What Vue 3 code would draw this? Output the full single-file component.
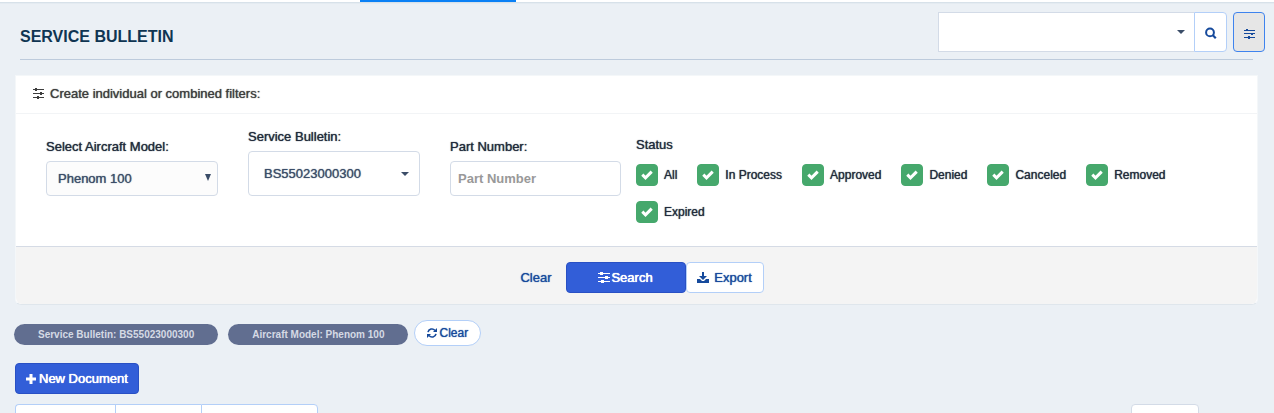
<script setup>
import { ref, reactive } from 'vue'

const quickSearch = ref('')
const model = ref('Phenom 100')
const bulletin = ref('BS55023000300')
const partNumber = ref('')
const statuses = reactive(
  ['All', 'In Process', 'Approved', 'Denied', 'Canceled', 'Removed', 'Expired'].map((name) => ({
    name,
    checked: true
  }))
)
const chips = ['Service Bulletin: BS55023000300', 'Aircraft Model: Phenom 100']
</script>

<template>
  <div class="page">
    <nav class="tabs" aria-label="Sections"><span class="tab-active"></span></nav>

    <header class="header">
      <h1 class="title">SERVICE BULLETIN</h1>
      <div class="actions">
        <div class="group">
          <div class="picker quick">
            <select v-model="quickSearch" class="select" aria-label="Quick search">
              <option value=""></option>
            </select>
            <svg class="caret" width="8" height="4" viewBox="0 0 8 4"><path d="M0 0h8L4 4z" /></svg>
          </div>
          <button class="icon-btn lookup" type="button" aria-label="Search">
            <svg width="12" height="12" viewBox="0 0 12 12" fill="none" stroke="currentColor" stroke-width="2">
              <circle cx="5" cy="5.4" r="3.9" /><path d="M7.6 8l3.2 3.2" stroke-width="2.2" />
            </svg>
          </button>
        </div>
        <button class="icon-btn toggle" type="button" aria-label="Filters">
          <svg width="11" height="11" viewBox="0 0 11 11" fill="currentColor">
            <path d="M0 2h11v1H0zM0 5h11v1H0zM0 9h11v1H0zM2 1h2v2H2zM7 5h2v2H7zM4 8h2v3H4z" />
          </svg>
        </button>
      </div>
    </header>

    <form class="card" @submit.prevent>
      <div class="card-head">
        <svg width="12" height="11" viewBox="0 0 12 11" fill="currentColor">
          <path d="M0 1h11v1H0zM0 5h11v1H0zM0 9h11v1H0zM2 0h2v3H2zM7 4h2v3H7zM4 8h2v3H4z" />
        </svg>
        <span>Create individual or combined filters:</span>
      </div>

      <div class="card-body">
        <div class="field low">
          <label for="model">Select Aircraft Model:</label>
          <div class="picker model">
            <select id="model" v-model="model" class="select">
              <option>Phenom 100</option>
            </select>
            <svg class="caret" width="6" height="7" viewBox="0 0 6 7"><path d="M0 0h6L3 7z" /></svg>
          </div>
        </div>
        <div class="field">
          <label for="bulletin">Service Bulletin:</label>
          <div class="picker bulletin">
            <select id="bulletin" v-model="bulletin" class="select">
              <option>BS55023000300</option>
            </select>
            <svg class="caret" width="8" height="4" viewBox="0 0 8 4"><path d="M0 0h8L4 4z" /></svg>
          </div>
        </div>
        <div class="field low">
          <label for="part">Part Number:</label>
          <input id="part" v-model="partNumber" class="text" type="text" placeholder="Part Number" />
        </div>
        <fieldset class="status">
          <legend>Status</legend>
          <div class="checks">
            <label v-for="s in statuses" :key="s.name" class="check">
              <span class="tick">
                <input v-model="s.checked" type="checkbox" />
                <svg width="12" height="10" viewBox="0 0 12 10" fill="none" stroke="#fff" stroke-width="3">
                  <path d="M1.3 4.6l3.2 3.2 6.2-6.2" />
                </svg>
              </span>
              {{ s.name }}
            </label>
          </div>
        </fieldset>
      </div>

      <div class="card-foot">
        <button class="btn link" type="reset">Clear</button>
        <button class="btn primary wide" type="submit">
          <svg width="12" height="11" viewBox="0 0 12 11" fill="currentColor">
            <path d="M0 1h12v1H0zM0 5h12v1H0zM0 9h12v1H0zM2 0h3v3H2zM7 4h3v3H7zM3 8h3v3H3z" />
          </svg>
          Search
        </button>
        <button class="btn outline export" type="button">
          <svg width="12" height="11" viewBox="0 0 12 11" fill="currentColor">
            <path d="M5 0h2v4h3L6 8 2 4h3zM0 7h3l2 2h2l2-2h3v4H0z" />
          </svg>
          Export
        </button>
      </div>
    </form>

    <div class="chips">
      <span v-for="chip in chips" :key="chip" class="chip">{{ chip }}</span>
      <button class="btn outline pill" type="button">
        <svg width="10" height="10" viewBox="0 0 10 10">
          <path d="M1 4.2A4 4 0 0 1 8 2.4M9 5.8A4 4 0 0 1 2 7.6" fill="none" stroke="currentColor" stroke-width="1.6" />
          <path d="M10 0v4H6zM0 10V6h4z" fill="currentColor" />
        </svg>
        Clear
      </button>
    </div>

    <button class="btn primary create" type="button">
      <svg width="10" height="10" viewBox="0 0 10 10" fill="currentColor">
        <path d="M3.5 0h3v3.5H10v3H6.5V10h-3V6.500H0v-3h3.500z" />
      </svg>
      New Document
    </button>

    <div class="table-tools">
      <div class="export-group">
        <button type="button" aria-label="Copy"></button>
        <button type="button" aria-label="Excel"></button>
        <button type="button" aria-label="Column visibility"></button>
      </div>
      <select class="page-size" aria-label="Rows per page"></select>
    </div>
  </div>
</template>

<style>
html {
  scrollbar-width: none;
  background: #ebf0f5;
}
</style>

<style scoped>
.page {
  font-family: "Liberation Sans", Arial, sans-serif;
  font-size: 13px;
  line-height: 20px;
  color: #212b3b;
  background: #ebf0f5;
}
.page * {
  box-sizing: border-box;
}
button,
select,
input {
  font: inherit;
  color: inherit;
  margin: 0;
}
button {
  cursor: pointer;
}
svg {
  flex: none;
  display: block;
}
.tabs {
  display: grid;
  grid-template-columns: 360px 156px 1fr;
  height: 4px;
  background: linear-gradient(#fff 2px, #d7e1e9 2px, #d7e1e9 3px, #e4ebf1 3px);
}
.tab-active {
  grid-column: 2;
  height: 2px;
  background: #0a80f5;
}
.header {
  display: flex;
  justify-content: space-between;
  align-items: flex-start;
  height: 56px;
  margin: 0 21px 15px 20px;
  padding-top: 8px;
  border-bottom: 1px solid #bdcbdc;
}
.title {
  margin: 15px 0 0;
  font-size: 16px;
  line-height: 20px;
  font-weight: bold;
  color: #0f3552;
}
.actions {
  display: flex;
  gap: 6px;
  margin-right: -12px;
}
.group {
  display: flex;
}
.icon-btn {
  display: grid;
  place-items: center;
  height: 40px;
  width: 32px;
  padding: 2px 0 0;
  color: #164a9c;
  background: #fff;
  border: 1px solid #b3cff8;
}
.lookup {
  width: 33px;
  border-radius: 0 4px 4px 0;
}
.toggle {
  background: #e6e6e6;
  border-color: #3e83ee;
  border-radius: 4px;
}
.picker {
  display: grid;
  align-items: center;
  background: #fff;
  border: 1px solid #d3dbe7;
  border-radius: 4px;
  color: #3b4d68;
}
.picker > * {
  grid-area: 1 / 1;
}
.select {
  appearance: none;
  width: 100%;
  height: 100%;
  border: 0;
  background: transparent;
  text-shadow: 0 0 1px currentColor;
}
.caret {
  justify-self: end;
  fill: currentColor;
  pointer-events: none;
}
.quick {
  width: 256px;
  height: 40px;
  border-radius: 0;
  border-right: 0;
}
.quick .caret {
  margin: 0 9px 1px 0;
}
.model {
  height: 35px;
  background: #fcfcfc;
}
.model .select {
  padding: 0 24px 0 11px;
}
.model .caret {
  margin: 0 6px 2px 0;
}
.bulletin {
  height: 45px;
}
.bulletin .select {
  padding: 0 24px 0 15px;
}
.bulletin .caret {
  margin-right: 10px;
}
.card {
  margin: 0 16px 0 15px;
  border: 1px solid #f4f7f9;
  border-bottom-color: #dfe6ec;
  border-radius: 0 0 6px 6px;
  background: #fff;
}
.card-head {
  display: flex;
  align-items: center;
  gap: 5px;
  height: 38px;
  padding: 0 17px 2px;
  border-bottom: 1px solid #f2f4f6;
  color: #3d3d3d;
  text-shadow: 0 0 1px currentColor;
}
.card-body {
  display: grid;
  grid-template-columns: 172px 172px 171px minmax(0, 1fr);
  column-gap: 30px;
  align-items: start;
  padding: 13px 30px 23px;
}
.field {
  display: grid;
  gap: 4px;
}
.low {
  margin-top: 10px;
}
.field > label,
legend,
.check {
  text-shadow: 0 0 1px currentColor;
}
.text {
  width: 100%;
  height: 35px;
  padding: 0 7px;
  border: 1px solid #d3dbe7;
  border-radius: 4px;
  background: #fff;
  font-weight: bold;
}
.text::placeholder {
  color: #999;
  opacity: 1;
}
.status {
  margin: 8px 0 0 -15px;
  padding: 0;
  border: 0;
  min-width: 0;
}
legend {
  padding: 0;
}
.checks {
  display: flex;
  flex-wrap: wrap;
  gap: 15px 20px;
  margin-top: 9px;
}
.check {
  display: flex;
  align-items: center;
  gap: 6px;
  font-size: 12px;
}
.tick {
  display: grid;
  place-items: center;
}
.tick > * {
  grid-area: 1 / 1;
}
.tick input {
  appearance: none;
  width: 22px;
  height: 22px;
  border-radius: 4px;
  border: 1px solid #46a86c;
}
.tick input:checked {
  background: #46a86c;
}
.tick svg {
  pointer-events: none;
}
.card-foot {
  display: flex;
  justify-content: center;
  align-items: center;
  height: 58px;
  padding-top: 3px;
  border-top: 1px solid #d5dbe5;
  border-radius: 0 0 6px 6px;
  background: #f4f4f4;
}
.btn {
  display: inline-flex;
  align-items: center;
  justify-content: center;
  height: 31px;
  padding: 1px 10px 0;
  border: 1px solid transparent;
  border-radius: 4px;
  text-shadow: 0 0 1px currentColor;
}
.link {
  margin-right: 3px;
  background: none;
  color: #164a9c;
}
.primary {
  background: #325ed8;
  border-color: #2950c4;
  color: #fff;
  text-shadow: 0 0 0 currentColor, 0 0 1px currentColor;
}
.wide {
  width: 120px;
  gap: 1px;
}
.outline {
  background: #fff;
  border-color: #b3cff8;
  color: #164a9c;
}
.export {
  width: 78px;
  gap: 5px;
}
.chips {
  display: flex;
  align-items: flex-end;
  gap: 10px;
  margin: 15px 14px 0;
}
.chip {
  padding: 0 24px;
  margin-bottom: 1px;
  border-radius: 11px;
  background: #616e90;
  color: #d5dae5;
  font-size: 10px;
  line-height: 21px;
  font-weight: bold;
}
.pill {
  gap: 2px;
  height: 26px;
  margin-left: -4px;
  padding: 0 12px;
  border-radius: 13px;
  font-size: 12px;
}
.create {
  gap: 3px;
  margin: 17px 15px 0;
}
.table-tools {
  display: flex;
  justify-content: space-between;
  margin: 10px 75px 0 15px;
}
.export-group {
  display: grid;
  grid-template-columns: 100px 86px 117px;
}
.export-group button {
  height: 31px;
  border: 1px solid #b3cff8;
  border-right: 0;
  background: #fff;
}
.export-group button:first-child {
  border-radius: 4px 0 0 4px;
}
.export-group button:last-child {
  border-right: 1px solid #b3cff8;
  border-radius: 0 4px 4px 0;
}
.page-size {
  appearance: none;
  width: 68px;
  height: 31px;
  border: 1px solid #d3dbe7;
  border-radius: 4px;
  background: #fff;
}
</style>
